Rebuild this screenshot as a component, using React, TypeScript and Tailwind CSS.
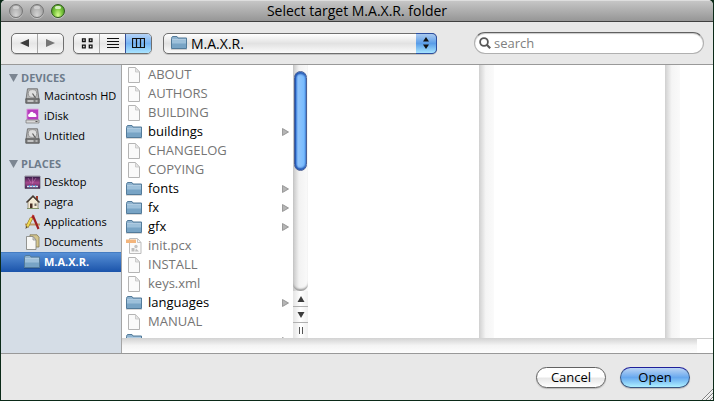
import { useState } from "react";
import type { ReactNode } from "react";

type Entry = { name: string; kind: "folder" | "file" | "image" };

const ENTRIES: Entry[] = [
  { name: "ABOUT", kind: "file" },
  { name: "AUTHORS", kind: "file" },
  { name: "BUILDING", kind: "file" },
  { name: "buildings", kind: "folder" },
  { name: "CHANGELOG", kind: "file" },
  { name: "COPYING", kind: "file" },
  { name: "fonts", kind: "folder" },
  { name: "fx", kind: "folder" },
  { name: "gfx", kind: "folder" },
  { name: "init.pcx", kind: "image" },
  { name: "INSTALL", kind: "file" },
  { name: "keys.xml", kind: "file" },
  { name: "languages", kind: "folder" },
  { name: "MANUAL", kind: "file" },
  { name: "", kind: "folder" },
];

const DEVICES = [
  { name: "Macintosh HD", icon: <DriveIcon /> },
  { name: "iDisk", icon: <IDiskIcon /> },
  { name: "Untitled", icon: <DriveIcon /> },
];

const PLACES = [
  { name: "Desktop", icon: <DesktopIcon /> },
  { name: "pagra", icon: <HomeIcon /> },
  { name: "Applications", icon: <ApplicationsIcon /> },
  { name: "Documents", icon: <DocumentsIcon /> },
  { name: "M.A.X.R.", icon: <FolderIcon /> },
];

export default function App() {
  const [place, setPlace] = useState("M.A.X.R.");
  const [view, setView] = useState("columns");
  const [query, setQuery] = useState("");

  return (
    <div className="h-screen bg-[#0b2a18] px-px pb-px font-['Open_Sans','Noto_Sans',sans-serif] text-black">
      <div className="relative flex h-full flex-col overflow-hidden rounded-t-[5px] bg-[#e8e8e8]">
        <header className="relative flex h-[22px] shrink-0 items-center border-t border-b border-t-[#dedede] border-b-[#404040] bg-linear-to-b from-[#c6c6c6] to-[#969696] px-2">
          <h1 className="absolute inset-x-0 text-center text-[14px] leading-5">Select target M.A.X.R. folder</h1>
          <div className="relative flex gap-[7px]">
            <TrafficLight label="Close" />
            <TrafficLight label="Minimize" />
            <TrafficLight label="Zoom" active />
          </div>
        </header>

        <div className="flex h-[43px] shrink-0 items-center border-b border-[#999999] pr-[9px] pl-[10px]">
          <div className="flex h-[21px] w-[53px] overflow-hidden rounded-[5px] border border-[#6f6f6f] bg-linear-to-b from-[#fdfdfd] via-[#e6e6e6] to-[#f8f8f8] shadow-[0_1px_0_#c4c4c4]">
            <button aria-label="Back" className="flex flex-1 items-center justify-center border-r border-[#a8a8a8]">
              <svg width="9" height="8" viewBox="0 0 9 8"><path d="M9 0v8L0 4z" fill="#3c3c3c" /></svg>
            </button>
            <button aria-label="Forward" className="flex flex-1 items-center justify-center">
              <svg width="9" height="8" viewBox="0 0 9 8"><path d="M0 0v8l9-4z" fill="#757575" /></svg>
            </button>
          </div>

          <div className="ml-[9px] flex h-[21px] w-[79px] overflow-hidden rounded-[5px] border border-[#6f6f6f] bg-linear-to-b from-[#fdfdfd] via-[#e6e6e6] to-[#f8f8f8] shadow-[0_1px_0_#c4c4c4]">
            <ViewButton label="Icons" active={view === "icons"} onClick={() => setView("icons")}>
              <svg width="12" height="11" viewBox="0 0 12 11" fill="none" stroke="#111">
                <path d="M1.500.8h2.700v2.700H1.500zM8.300.8H11v2.700H8.300zM1.500 7.200h2.700v2.700H1.500zM8.300 7.200H11v2.700H8.300z" strokeWidth="1.3" />
              </svg>
            </ViewButton>
            <ViewButton label="List" active={view === "list"} onClick={() => setView("list")}>
              <svg width="12" height="11" viewBox="0 0 12 11" stroke="#111"><path d="M0 .5h12M0 3.500h12M0 6.500h12M0 9.500h12" /></svg>
            </ViewButton>
            <ViewButton label="Columns" active={view === "columns"} onClick={() => setView("columns")}>
              <svg width="13" height="10" viewBox="0 0 13 10" fill="none" stroke="#111"><path d="M.5.5h12v9H.5zM4.500 0v10M8.500 0v10" strokeWidth="1.2" /></svg>
            </ViewButton>
          </div>

          <div className="relative ml-[11px] h-[21px] w-[274px]">
            <select
              aria-label="Current folder"
              defaultValue="M.A.X.R."
              className="block h-full w-full appearance-none rounded-[5px] border border-[#6f6f6f] bg-linear-to-b from-[#ffffff] via-[#e2e2e2] to-[#fbfbfb] pl-[27px] text-[14px] leading-[19px] shadow-[0_1px_0_#c4c4c4]"
            >
              <option>M.A.X.R.</option>
              <option>Applications</option>
            </select>
            <span className="pointer-events-none absolute top-[2px] left-[8px]"><FolderIcon /></span>
            <span className="pointer-events-none absolute inset-y-0 right-0 flex w-[21px] items-center justify-center rounded-r-[5px] border border-l-0 border-[#2d4fa0] bg-linear-to-b from-[#a9c9ef] via-[#5a9de8] to-[#a6e4ff]">
              <svg width="6" height="12" viewBox="0 0 6 12"><path d="M3 0l3 4.400H0zM3 12l3-4.400H0z" fill="#111" /></svg>
            </span>
          </div>

          <div className="relative ml-auto h-[22px] w-[230px]">
            <input
              type="search"
              aria-label="Search"
              placeholder="search"
              value={query}
              onChange={(e) => setQuery(e.target.value)}
              className="block h-full w-full appearance-none rounded-full border border-[#b0b0b0] border-t-[#606060] bg-white pr-3 pl-[19px] text-[13px] leading-5 shadow-[inset_0_1px_1px_#c8c8c8] outline-none placeholder:text-[#808080]"
            />
            <svg className="pointer-events-none absolute top-[5px] left-[5px]" width="12" height="12" viewBox="0 0 12 12" fill="none" stroke="#585858">
              <circle cx="5" cy="5" r="3.9" strokeWidth="1.8" />
              <path d="M7.8 7.800l3.400 3.400" strokeWidth="2.2" />
            </svg>
          </div>
        </div>

        <main className="flex min-h-0 flex-1">
          <nav className="w-[121px] shrink-0 border-r border-[#a5a5a5] bg-[#d5dde6] pt-[5px]">
            <SidebarHeading title="DEVICES" />
            {DEVICES.map((item) => (
              <SidebarItem key={item.name} {...item} selected={place === item.name} onClick={() => setPlace(item.name)} />
            ))}
            <div className="h-[10px]" />
            <SidebarHeading title="PLACES" />
            {PLACES.map((item) => (
              <SidebarItem key={item.name} {...item} selected={place === item.name} onClick={() => setPlace(item.name)} />
            ))}
          </nav>

          <div className="flex min-w-0 flex-1 flex-col bg-white">
            <div className="flex min-h-0 flex-1 overflow-hidden">
              <ul className="w-[171px] shrink-0 overflow-hidden">
                {ENTRIES.map((entry) => (
                  <FileRow key={entry.name} entry={entry} />
                ))}
              </ul>
              <ColumnScrollbar />
              <div className="w-[171px] shrink-0" />
              <EmptyTrack />
              <div className="w-[171px] shrink-0" />
              <EmptyTrack />
            </div>
            <div className="flex h-[15px] shrink-0">
              <div className="flex-1 bg-linear-to-b from-[#d2d2d2] via-[#f4f4f4] via-50% to-[#fdfdfd]" />
              <div className="w-4 border-t border-[#cccccc]" />
            </div>
          </div>
        </main>

        <footer className="flex h-[47px] shrink-0 items-center justify-end gap-[14px] border-t border-[#999999] pr-[23px]">
          <button className="h-[21px] w-[70px] rounded-full border border-[#626262] bg-linear-to-b from-[#ffffff] from-45% via-[#e8e8e8] via-55% to-[#ffffff] text-[13px] leading-[18px] shadow-[0_1px_1px_#b8b8b8]">
            Cancel
          </button>
          <button className="h-[21px] w-[70px] rounded-full border border-[#3a5680] border-t-[#20209a] bg-linear-to-b from-[#bcd5f4] via-[#67a8ee] to-[#aef0ff] text-[13px] leading-[18px] shadow-[0_1px_1px_#b8b8b8]">
            Open
          </button>
        </footer>
        <svg className="absolute right-0 bottom-0" width="12" height="12" viewBox="0 0 12 12">
          <path d="M1 12L12 1M5 12l7-7M9 12l3-3" stroke="#808080" />
          <path d="M2 12L12 2M6 12l6-6M10 12l2-2" stroke="#ffffff" strokeWidth=".6" />
        </svg>
      </div>
    </div>
  );
}

function TrafficLight({ label, active }: { label: string; active?: boolean }) {
  return (
    <button
      aria-label={label}
      className={`h-[14px] w-[14px] rounded-full border ${
        active
          ? "border-[#2f5a1c] bg-[radial-gradient(ellipse_at_50%_85%,#d8ff90,#79c53c_50%,#3f8a1e)]"
          : "border-[#757575] bg-[radial-gradient(ellipse_at_50%_85%,#d4d4d4,#b2b2b2_55%,#8e8e8e)]"
      } shadow-[0_1px_0_#c4c4c4]`}
    >
      <span className={`mx-auto -mt-[5px] block h-[3px] w-[6px] rounded-full ${active ? "bg-[#d5efc0]" : "bg-[#d0d0d0]"}`} />
    </button>
  );
}

function ViewButton({ label, active, onClick, children }: { label: string; active: boolean; onClick: () => void; children: ReactNode }) {
  return (
    <button
      aria-label={label}
      aria-pressed={active}
      onClick={onClick}
      className={`flex flex-1 items-center justify-center border-r border-[#a8a8a8] last:border-r-0 ${
        active ? "bg-linear-to-b from-[#b4d2f6] via-[#75b3f3] to-[#a8e4ff] shadow-[0_0_0_1px_#34509c]" : ""
      }`}
    >
      {children}
    </button>
  );
}

function SidebarHeading({ title }: { title: string }) {
  return (
    <h2 className="flex h-4 items-center gap-[3px] pl-2 text-[11px] leading-4 font-bold text-[#6d7b8b]">
      <svg width="9" height="8" viewBox="0 0 9 8"><path d="M0 0h9L4.500 8z" fill="#7c8692" /></svg>
      {title}
    </h2>
  );
}

function SidebarItem({ name, icon, selected, onClick }: { name: string; icon: ReactNode; selected: boolean; onClick: () => void }) {
  return (
    <button
      onClick={onClick}
      className={`flex h-5 w-full items-center gap-[3px] pl-[23px] text-left text-[11px] leading-5 whitespace-nowrap ${
        selected ? "bg-linear-to-b from-[#5a93d8] to-[#1a53aa] font-bold text-white shadow-[inset_0_1px_0_#447cc2]" : "font-medium"
      }`}
    >
      <span className="flex w-[17px] shrink-0">{icon}</span>
      {name}
    </button>
  );
}

function FileRow({ entry }: { entry: Entry }) {
  const folder = entry.kind === "folder";
  return (
    <li>
      <button
        aria-label={entry.name || "Folder"}
        disabled={!folder}
        className={`flex h-[19px] w-full items-center gap-[6px] pr-1 pl-1 text-left text-[13px] leading-[19px] ${folder ? "text-black" : "text-[#757575]"}`}
      >
        {folder ? <FolderIcon /> : entry.kind === "image" ? <ImageFileIcon /> : <FileIcon />}
        <span className="flex-1">{entry.name}</span>
        {folder ? (
          <svg width="7" height="8" viewBox="0 0 7 8"><path d="M.5.5v7L6.500 4z" fill="#b5b5b5" stroke="#8a8a8a" strokeWidth=".8" /></svg>
        ) : null}
      </button>
    </li>
  );
}

function ColumnScrollbar() {
  return (
    <div className="flex w-[15px] shrink-0 flex-col bg-linear-to-r from-[#c6c6c6] via-[#f2f2f2] via-40% to-[#fafafa]">
      <div className="flex-1 rounded-b-[7px] pt-[6px] pl-px shadow-[inset_0_-3px_2px_-1px_#9c9c9c]">
        <div className="h-[100px] w-[13px] rounded-full border border-[#4a5f94] bg-linear-to-r from-[#3b7fe0] via-[#8fc4fb] via-30% to-[#6fb8ff] shadow-[inset_0_2px_2px_#2458b4,inset_0_-2px_2px_#2458b4,inset_1px_0_1px_#2458b4]" />
      </div>
      <div className="flex flex-col bg-linear-to-r from-[#e4e4e4] via-[#ffffff] to-[#f0f0f0]">
        <button aria-label="Scroll up" className="flex h-4 items-center justify-center border-b border-[#b0b0b0]">
          <svg width="8" height="6" viewBox="0 0 8 6"><path d="M4 0l3.500 6h-7z" fill="#3c3c3c" /></svg>
        </button>
        <button aria-label="Scroll down" className="flex h-4 items-center justify-center border-b border-[#b0b0b0]">
          <svg width="8" height="6" viewBox="0 0 8 6"><path d="M.5 0h7L4 6z" fill="#3c3c3c" /></svg>
        </button>
        <div className="flex h-[15px] items-center justify-center">
          <svg width="4" height="7" viewBox="0 0 4 7"><path d="M.5 0v7M3.500 0v7" stroke="#555" /></svg>
        </div>
      </div>
    </div>
  );
}

function EmptyTrack() {
  return <div className="w-[15px] shrink-0 bg-linear-to-r from-[#d0d0d0] via-[#f5f5f5] via-45% to-[#fafafa]" />;
}

function FolderIcon() {
  return (
    <svg className="shrink-0" width="16" height="16" viewBox="0 0 16 16">
      <path d="M.5 3.500V3l1-1.500h4.500l1 1.500h8.500v10.500H.5z" fill="#8fb3cf" stroke="#537b9a" />
      <path d="M1 5h14v4H1z" fill="#9dc0da" />
      <path d="M1 8.500h14V13H1z" fill="#78a4c5" />
      <path d="M1 4.500h14" stroke="#bdd6e8" strokeWidth=".7" />
      <path d="M0 14.500h16" stroke="#000" strokeOpacity=".15" />
    </svg>
  );
}

function FileIcon() {
  return (
    <svg className="shrink-0" width="16" height="16" viewBox="0 0 16 16">
      <path d="M2.500.5h7l4 4.500v10.500h-11z" fill="#fafafa" stroke="#b4b4b4" />
      <path d="M9.500.5V5h4z" fill="#e6e6e6" stroke="#c4c4c4" strokeWidth=".8" />
    </svg>
  );
}

function ImageFileIcon() {
  return (
    <svg className="shrink-0" width="16" height="16" viewBox="0 0 16 16">
      <path d="M3.500.5h8l3.500 4v11H3.500z" fill="#fafafa" stroke="#bcbcbc" />
      <path d="M11.500.5v4H15" fill="none" stroke="#c4c4c4" />
      <path d="M0 1.500h10v3.500H0z" fill="#f3b57c" />
      <path d="M5.500 10h3v3.500h-3zM10 10.500l3 3h-4z" fill="#bdbdbd" />
      <circle cx="10" cy="8.500" r="1.700" fill="#c4c4c4" />
    </svg>
  );
}

function DriveIcon() {
  return (
    <svg className="shrink-0" width="16" height="16" viewBox="0 0 16 16">
      <path d="M3.500.8h10l1.500 10.700H2z" fill="#b4b4b4" stroke="#6f6f6f" strokeWidth=".9" />
      <ellipse cx="8.500" cy="5.500" rx="4.200" ry="3.900" fill="#dedede" stroke="#8d8d8d" strokeWidth=".8" />
      <path d="M8.500 5.500l3 4.500" stroke="#5e5e5e" strokeWidth="1.200" />
      <path d="M1.800 10.800h13.400v4.400H1.800z" fill="#7d7d7d" stroke="#4d4d4d" strokeWidth=".8" />
      <path d="M3.500 13h6" stroke="#dadada" strokeWidth="1.600" />
      <path d="M11.500 13h2" stroke="#e8e8e8" />
    </svg>
  );
}

function IDiskIcon() {
  return (
    <svg className="shrink-0" width="16" height="16" viewBox="0 0 16 16">
      <path d="M2.800 1h11.700v11H2.800z" fill="#b83cc0" stroke="#d9b2de" />
      <path d="M5 9a1.700 1.700 0 01.5-3.200 2.200 2.200 0 014.200-.6 1.800 1.800 0 012.300 1.800A1.200 1.200 0 0112 9z" fill="#fff" />
      <path d="M2 12h13v3H2z" fill="#d8d8d8" stroke="#777" strokeWidth=".7" />
      <path d="M11.500 13.500h2" stroke="#555" />
    </svg>
  );
}

function DesktopIcon() {
  return (
    <svg className="shrink-0" width="17" height="16" viewBox="0 0 17 16">
      <defs>
        <linearGradient id="desktopSky" x2="0" y2="1">
          <stop offset="0" stopColor="#28163f" />
          <stop offset=".55" stopColor="#a8488f" />
          <stop offset="1" stopColor="#3c2652" />
        </linearGradient>
      </defs>
      <path d="M1 2h15v12.500H1z" fill="url(#desktopSky)" stroke="#4e4258" strokeWidth=".6" />
      <path d="M1 1.500h15v1H1z" fill="#c5c5d0" />
      <path d="M4 4l3 5M12 4l-4 6M8.500 3v6" stroke="#dca0d0" strokeWidth=".8" opacity=".5" />
      <path d="M3 12.500h11" stroke="#d9e5f2" strokeWidth="1.600" />
      <path d="M5 12h1M8 12h1M11 12h1" stroke="#3a9ae8" strokeWidth="1.500" />
    </svg>
  );
}

function HomeIcon() {
  return (
    <svg className="shrink-0" width="17" height="16" viewBox="0 0 17 16">
      <path d="M12 2h2v4h-2z" fill="#a43c28" />
      <path d="M4 8l5-5 5 5v6.500H4z" fill="#f3ead5" stroke="#82725c" strokeWidth=".7" />
      <path d="M2.500 8.500L9 2l6.500 6.500" fill="none" stroke="#453b34" strokeWidth="1.500" />
      <path d="M6 9.500h2.500v5H6z" fill="#4a2f24" />
      <path d="M10.500 9.500h2v2.500h-2z" fill="#6f6a66" />
      <path d="M3 14.500h12" stroke="#83946a" />
    </svg>
  );
}

function ApplicationsIcon() {
  return (
    <svg className="shrink-0" width="17" height="16" viewBox="0 0 17 16">
      <path d="M1 10.500h15" stroke="#c09a68" strokeWidth="2.200" />
      <path d="M9.500 1L7.500 5" stroke="#c73a30" strokeWidth="2" />
      <path d="M9 2l5.500 13" stroke="#9e1f22" strokeWidth="2.200" />
      <path d="M7.500 4L3 13" stroke="#8c7424" strokeWidth="3.200" />
      <path d="M7.500 4L3 13" stroke="#f0d955" strokeWidth="2.100" />
      <path d="M2 12l-.5 3 2.500-2z" fill="#5b4b2f" />
    </svg>
  );
}

function DocumentsIcon() {
  return (
    <svg className="shrink-0" width="17" height="16" viewBox="0 0 17 16">
      <path d="M6 .8h7l2 2.500v9.700H6z" fill="#d4c58c" stroke="#857b54" strokeWidth=".8" />
      <path d="M2.500 2.500h6.500l3 3.500v9.500H2.500z" fill="#f8f8f6" stroke="#7e7e78" strokeWidth=".8" />
      <path d="M9 2.500V6h3z" fill="#d6d6d2" stroke="#8e8e88" strokeWidth=".7" />
    </svg>
  );
}
